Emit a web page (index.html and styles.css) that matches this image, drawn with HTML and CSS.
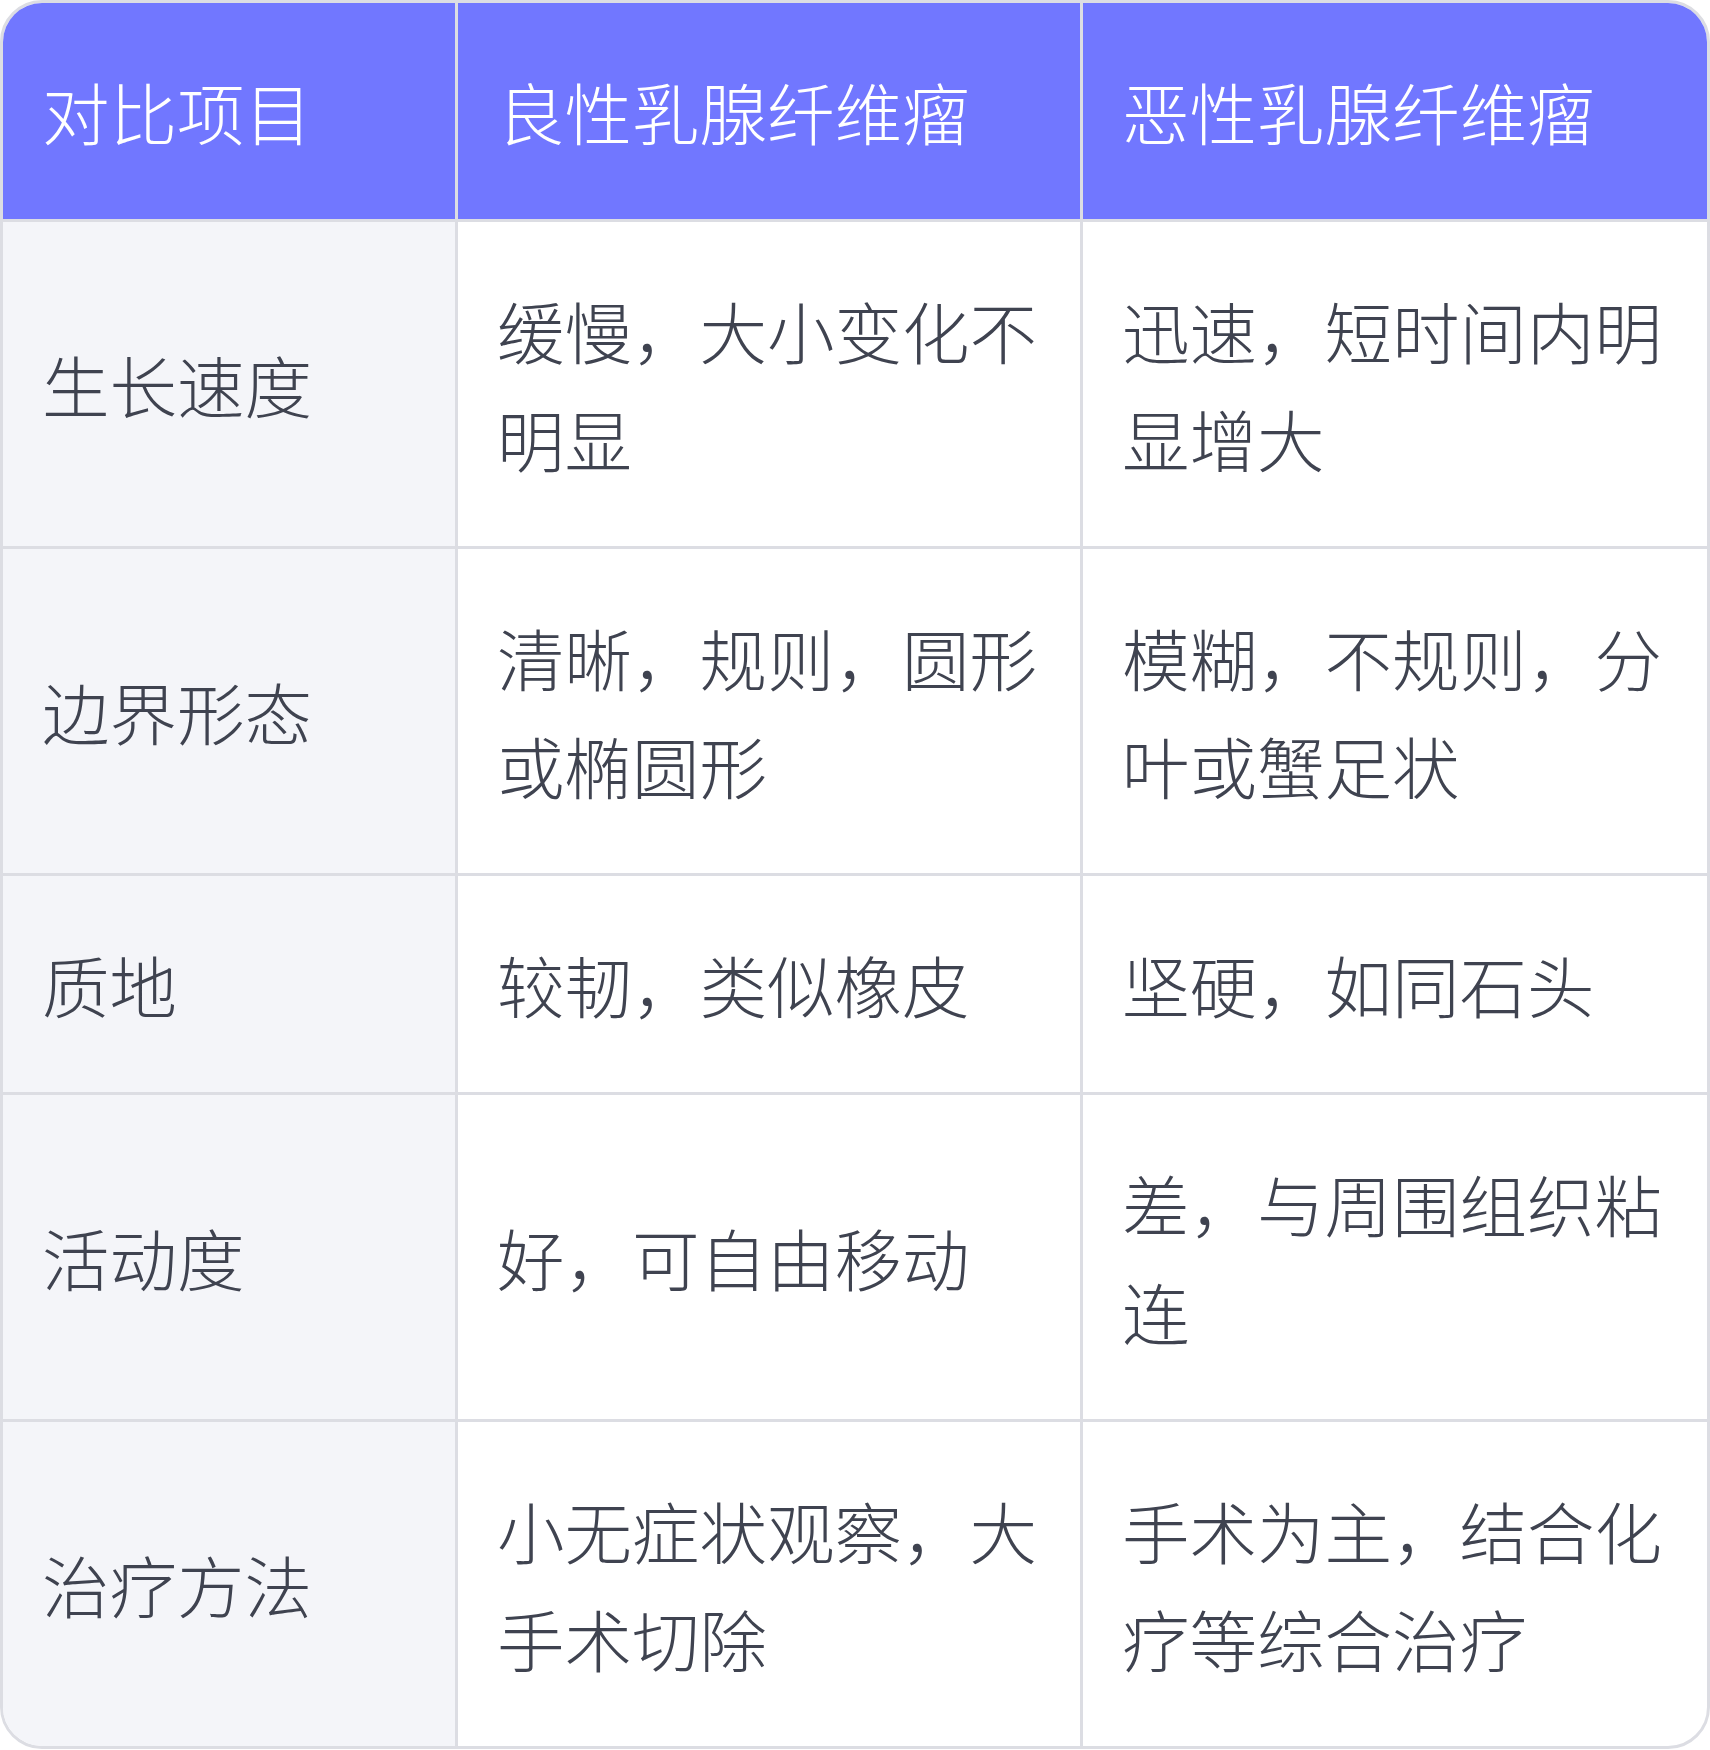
FILE: index.html
```html
<!DOCTYPE html>
<html lang="zh-CN">
<head>
<meta charset="utf-8">
<title>良性与恶性乳腺纤维瘤对比</title>
<link rel="stylesheet" href="styles.css">
</head>
<body>
<div class="card">
  <table class="cmp">
    <colgroup>
      <col class="c1">
      <col class="c2">
      <col class="c3">
    </colgroup>
    <thead>
      <tr>
        <th>对比项目</th>
        <th>良性乳腺纤维瘤</th>
        <th>恶性乳腺纤维瘤</th>
      </tr>
    </thead>
    <tbody>
      <tr>
        <td class="key">生长速度</td>
        <td>缓慢，大小变化不明显</td>
        <td>迅速，短时间内明显增大</td>
      </tr>
      <tr>
        <td class="key">边界形态</td>
        <td>清晰，规则，圆形或椭圆形</td>
        <td>模糊，不规则，分叶或蟹足状</td>
      </tr>
      <tr>
        <td class="key">质地</td>
        <td>较韧，类似橡皮</td>
        <td>坚硬，如同石头</td>
      </tr>
      <tr>
        <td class="key">活动度</td>
        <td>好，可自由移动</td>
        <td>差，与周围组织粘连</td>
      </tr>
      <tr>
        <td class="key">治疗方法</td>
        <td>小无症状观察，大手术切除</td>
        <td>手术为主，结合化疗等综合治疗</td>
      </tr>
    </tbody>
  </table>
</div>
</body>
</html>
```

FILE: styles.css
```css
html, body {
  margin: 0;
  padding: 0;
  background: #ffffff;
}

.card {
  width: 1710px;
  box-sizing: border-box;
  border: 3px solid #dcdde3;
  border-radius: 42px;
  overflow: hidden;
  background: #ffffff;
}

.cmp {
  width: 100%;
  table-layout: fixed;
  border-collapse: separate;
  border-spacing: 0;
  font-family: "Noto Sans CJK SC", "Noto Sans", sans-serif;
  font-weight: 300;
  font-size: 67.5px;
  line-height: 108px;
  color: #3f4350;
}

.c1 { width: 455px; }
.c2 { width: 625px; }

.cmp th,
.cmp td {
  text-align: left;
  vertical-align: middle;
  padding: 54px 32px 54px 39px;
  border-right: 3px solid #dcdde3;
  border-bottom: 3px solid #dcdde3;
  font-weight: 300;
}

.cmp th:last-child,
.cmp td:last-child {
  border-right: none;
}

.cmp tbody tr:last-child td {
  border-bottom: none;
}

.cmp th {
  background: #7177ff;
  color: #ffffff;
}

.cmp td.key {
  background: #f4f5f9;
}
```
